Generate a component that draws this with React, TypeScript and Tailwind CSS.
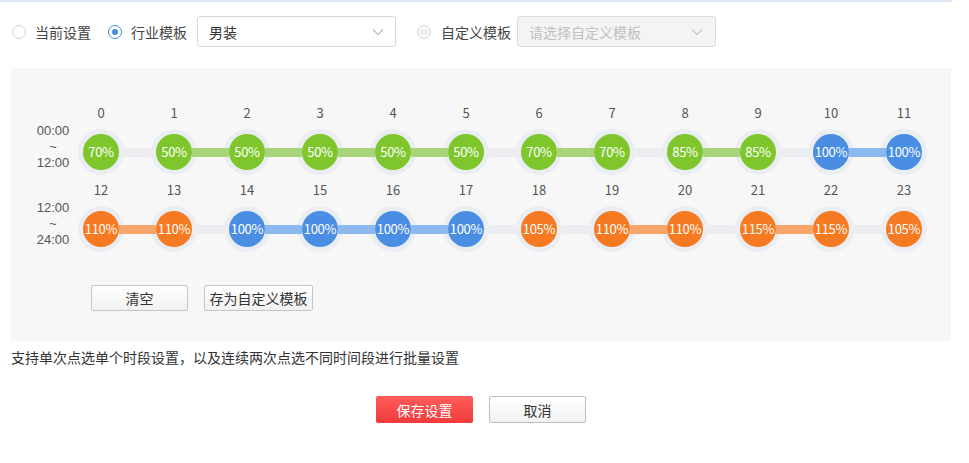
import React from "react";

type Kind = "green" | "blue" | "orange";

const circleCls: Record<Kind, string> = {
  green: "bg-[#7ec62c]",
  blue: "bg-[#4a8ee3]",
  orange: "bg-[#f57a21]",
};
const barCls: Record<Kind, string> = {
  green: "bg-[#a8d57c]",
  blue: "bg-[#8cb9ee]",
  orange: "bg-[#f8a56c]",
};

const kindOf = (v: number): Kind => (v < 100 ? "green" : v === 100 ? "blue" : "orange");

const rows = [
  { start: 0, vals: [70, 50, 50, 50, 50, 50, 70, 70, 85, 85, 100, 100], label: ["00:00", "~", "12:00"] },
  { start: 12, vals: [110, 110, 100, 100, 100, 100, 105, 110, 110, 115, 115, 105], label: ["12:00", "~", "24:00"] },
];

function Chevron({ color }: { color: string }) {
  return (
    <svg width="12" height="8" viewBox="0 0 12 8" fill="none">
      <path d="M1 1.5 L6 6.5 L11 1.5" stroke={color} strokeWidth="1.1" />
    </svg>
  );
}

function Radio({ checked, disabled }: { checked?: boolean; disabled?: boolean }) {
  return (
    <span
      className={
        "flex h-[14px] w-[14px] items-center justify-center rounded-full border " +
        (checked ? "border-[#3b8ee8] bg-white" : disabled ? "border-[#dcdcdc] bg-[#f7f7f7]" : "border-[#d6d6d6] bg-white")
      }
    >
      {checked && <span className="h-[6px] w-[6px] rounded-full bg-[#3b8ee8]" />}
      {disabled && <span className="h-[6px] w-[6px] rounded-full border border-[#e6e6e6]" />}
    </span>
  );
}

function Row({ start, vals, label }: { start: number; vals: number[]; label: string[] }) {
  return (
    <div className="flex">
      <div className="flex w-[44px] flex-col items-center pt-[19px] font-['Liberation_Sans',sans-serif] text-[13px] leading-[16px] text-[#555]">
        {label.map((l, i) => (
          <span key={i}>{l}</span>
        ))}
      </div>
      <div className="ml-[3px] flex flex-col">
        <div className="flex gap-[27px] text-[13px] leading-[18px] text-[#555]">
          {vals.map((_, i) => (
            <span key={i} className="w-[46px] text-center">
              {start + i}
            </span>
          ))}
        </div>
        <div className="mt-[7px] flex items-center">
          {vals.map((v, i) => {
            const k = kindOf(v);
            const next = vals[i + 1];
            const linked = next !== undefined && next === v;
            return (
              <React.Fragment key={i}>
                <div className="relative flex h-[46px] w-[46px] items-center justify-center rounded-full bg-[#eaeef3]">
                  <span
                    className={
                      "relative z-10 flex h-[36px] w-[36px] items-center justify-center rounded-full text-[13px] tracking-[-0.3px] text-white " +
                      circleCls[k]
                    }
                  >
                    {v}%
                  </span>
                </div>
                {next !== undefined && (
                  <div
                    className={
                      "relative z-[5] -mx-[5px] h-[9px] w-[37px] " + (linked ? barCls[k] : "bg-[#ebedf0]")
                    }
                  />
                )}
              </React.Fragment>
            );
          })}
        </div>
      </div>
    </div>
  );
}

export default function App() {
  return (
    <div className="h-[463px] w-[969px] bg-white font-['Noto_Sans_CJK_SC',sans-serif] text-[14px] text-[#333]">
      <div className="h-[2px] w-[952px] bg-[#dce8f4]" />
      <div className="flex h-[31px] items-center pl-[12px] mt-[14px] leading-[20px]">
        <Radio />
        <span className="ml-[9px] text-[#444]">当前设置</span>
        <span className="ml-[17px]">
          <Radio checked />
        </span>
        <span className="ml-[9px] text-[#444]">行业模板</span>
        <div className="ml-[10px] flex h-[31px] w-[199px] items-center justify-between rounded-[3px] border border-[#d9d9d9] bg-white pl-[11px] pr-[11px]">
          <span className="text-[#333]">男装</span>
          <Chevron color="#b8b8b8" />
        </div>
        <span className="ml-[21px]">
          <Radio disabled />
        </span>
        <span className="ml-[10px] text-[#444]">自定义模板</span>
        <div className="ml-[6px] flex h-[31px] w-[199px] items-center justify-between rounded-[3px] border border-[#dcdcdc] bg-[#f4f4f4] pl-[11px] pr-[12px]">
          <span className="text-[#c0c0c0]">请选择自定义模板</span>
          <Chevron color="#c4c4c4" />
        </div>
      </div>

      <div className="ml-[11px] mt-[21px] flex h-[273px] w-[940px] flex-col bg-[#f7f7f7] pl-[20px] pt-[36px]">
        <div className="flex flex-col gap-[6px]">
          {rows.map((r) => (
            <Row key={r.start} {...r} />
          ))}
        </div>
        <div className="ml-[60px] mt-[33px] flex gap-[16px] leading-[20px]">
          <button className="h-[26px] w-[97px] rounded-[2px] border border-[#c6c6c6] bg-gradient-to-b from-white to-[#f1f1f1] text-[#333]">
            清空
          </button>
          <button className="h-[26px] w-[109px] rounded-[2px] border border-[#c6c6c6] bg-gradient-to-b from-white to-[#f1f1f1] text-[#333]">
            存为自定义模板
          </button>
        </div>
      </div>

      <p className="ml-[11px] mt-[8px] leading-[16px] text-[#333]">支持单次点选单个时段设置，以及连续两次点选不同时间段进行批量设置</p>

      <div className="mt-[31px] flex gap-[16px] pl-[376px] leading-[20px]">
        <button className="h-[27px] w-[97px] rounded-[2px] bg-gradient-to-b from-[#ff5c5c] to-[#ef3a3a] text-white">
          保存设置
        </button>
        <button className="h-[27px] w-[97px] rounded-[2px] border border-[#bdbdbd] bg-gradient-to-b from-white to-[#f2f2f2] text-[#333]">
          取消
        </button>
      </div>
    </div>
  );
}
